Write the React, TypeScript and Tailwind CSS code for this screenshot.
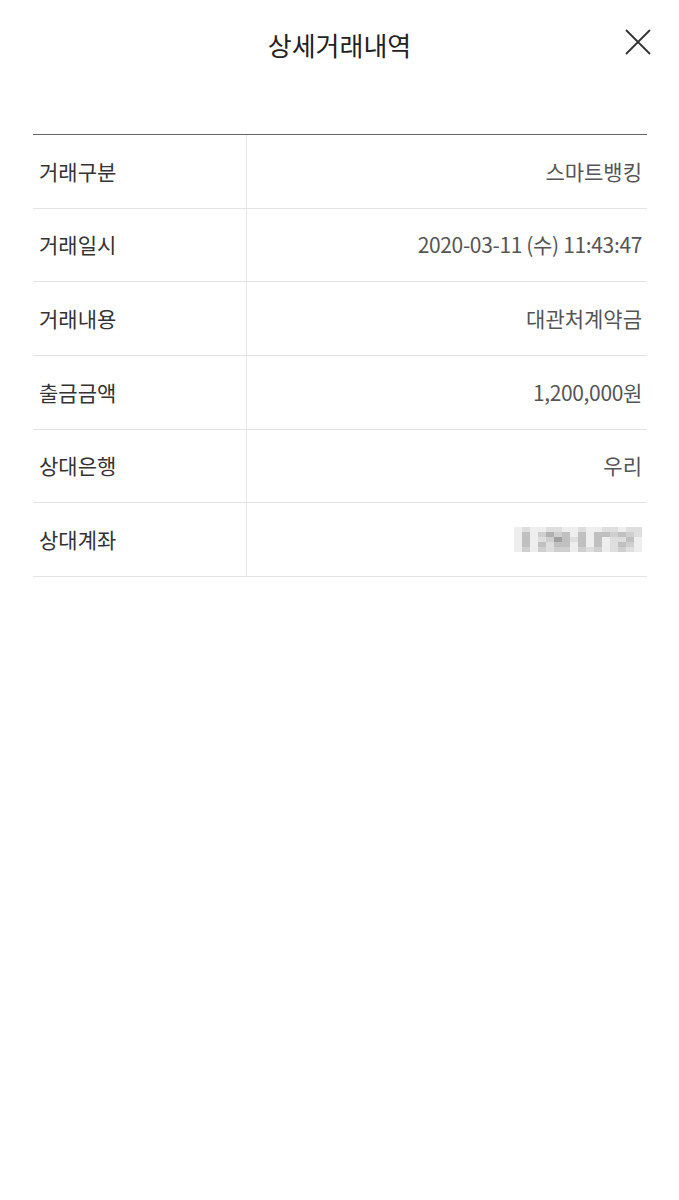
import React from 'react';

const rows: { label: string; value: string; tight?: boolean }[] = [
  { label: '거래구분', value: '스마트뱅킹' },
  { label: '거래일시', value: '2020-03-11 (수) 11:43:47', tight: true },
  { label: '거래내용', value: '대관처계약금' },
  { label: '출금금액', value: '1,200,000원', tight: true },
  { label: '상대은행', value: '우리' },
  { label: '상대계좌', value: '' },
];

// pixelated (masked) account number
const blur = [
  [1, 2, 1, 1, 2, 2, 1, 1, 2, 1, 1, 2, 2, 1, 2, 2],
  [1, 4, 1, 3, 5, 3, 4, 1, 4, 1, 4, 4, 3, 4, 3, 2],
  [1, 4, 1, 2, 3, 6, 4, 2, 4, 1, 4, 1, 2, 2, 4, 1],
  [1, 4, 1, 4, 2, 4, 4, 1, 4, 1, 4, 1, 2, 4, 3, 1],
  [1, 3, 1, 3, 2, 3, 3, 1, 3, 2, 3, 1, 2, 3, 2, 1],
];
const shades = ['#ffffff', '#eeeeee', '#dedede', '#cfcfcf', '#c0c0c0', '#b0b0b0', '#a0a0a0'];

function Masked() {
  return (
    <svg width="128" height="25" viewBox="0 0 128 25">
      {blur.map((r, y) =>
        r.map((v, x) => (
          <rect key={`${x}-${y}`} x={x * 8} y={y * 5} width="8" height="5" fill={shades[v]} />
        ))
      )}
    </svg>
  );
}

export default function App() {
  return (
    <div
      className="w-[679px] h-[1200px] bg-white text-[#333]"
      style={{ fontFamily: '"Noto Sans CJK KR", "Noto Sans", sans-serif' }}
    >
      <div className="relative h-[88px] flex items-center justify-center">
        <h1 className="text-[26px] text-[#222] font-normal">상세거래내역</h1>
        <button className="absolute right-[27px] top-[28px] w-[28px] h-[28px]">
          <svg viewBox="0 0 28 28" width="28" height="28" fill="none" stroke="#333" strokeWidth="1.8">
            <path d="M2 2 L26 26 M26 2 L2 26" />
          </svg>
        </button>
      </div>

      <div className="ml-[33px] mr-[32px] mt-[46px] border-t border-[#666]">
        {rows.map((r) => (
          <div key={r.label} className="flex h-[73.67px] border-b border-[#e3e3e3]">
            <div className="w-[214px] border-r border-[#e8e8e8] flex items-center pl-[6px] text-[21px] text-[#333]">
              {r.label}
            </div>
            <div
              className={`flex-1 flex items-center justify-end pr-[5px] text-[21px] text-[#555] ${
                r.tight ? 'tracking-[-0.35px]' : ''
              }`}
            >
              {r.value || <Masked />}
            </div>
          </div>
        ))}
      </div>
    </div>
  );
}
